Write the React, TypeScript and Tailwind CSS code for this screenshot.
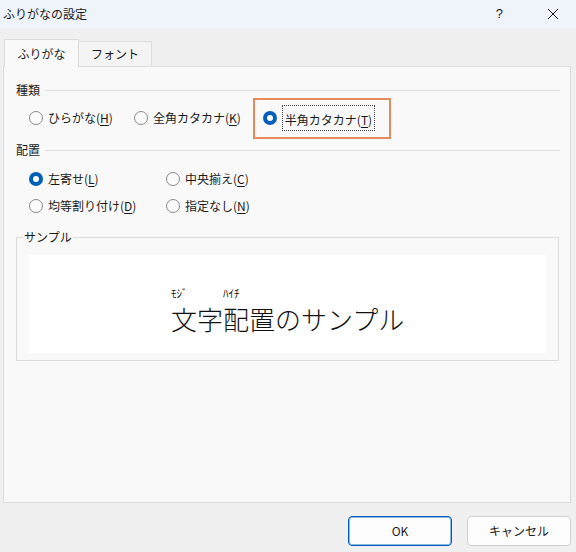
import React from 'react';

// ふりがなの設定 dialog

const jp = { fontFamily: '"Noto Sans CJK JP", "Noto Sans", sans-serif' };

function Radio({ checked = false }: { checked?: boolean }) {
  if (checked) {
    return (
      <span className="w-[14px] h-[14px] rounded-full bg-[#005fb8] flex items-center justify-center shrink-0">
        <span className="w-[6px] h-[6px] rounded-full bg-white" />
      </span>
    );
  }
  return <span className="w-[14px] h-[14px] rounded-full border border-[#8a8a8a] bg-[#fbfbfb] shrink-0" />;
}

function Label({ text, mn }: { text: string; mn: string }) {
  return (
    <span className="text-[12px] leading-[16px] text-[#1a1a1a] whitespace-nowrap">
      {text}(<span className="underline underline-offset-2">{mn}</span>)
    </span>
  );
}

function Option({ text, mn, checked, className = '' }: { text: string; mn: string; checked?: boolean; className?: string }) {
  return (
    <div className={`flex items-center gap-[5px] ${className}`}>
      <Radio checked={checked} />
      <Label text={text} mn={mn} />
    </div>
  );
}

function SectionHeader({ title }: { title: string }) {
  return (
    <div className="flex items-center h-[16px] pr-[10px]">
      <span className="text-[12px] leading-[16px] text-[#1a1a1a]">{title}</span>
      <div className="flex-1 h-px bg-[#dedede] ml-[5px]" />
    </div>
  );
}

export default function App() {
  return (
    <div className="w-[576px] h-[552px] bg-[#f0f0f0] flex flex-col overflow-hidden select-none" style={jp}>
      {/* Title bar */}
      <div className="h-[28px] bg-[#eff3fa] flex items-center shrink-0">
        <span className="pl-[3px] text-[12px] text-[#1a1a1a]">ふりがなの設定</span>
        <div className="flex-1" />
        <span className="text-[13px] text-[#1a1a1a] mr-[44px]" style={{ fontFamily: '"Liberation Sans", sans-serif' }}>?</span>
        <svg width="12" height="12" viewBox="0 0 12 12" className="mr-[17px]">
          <path d="M1 1 L11 11 M11 1 L1 11" stroke="#1a1a1a" strokeWidth="1" />
        </svg>
      </div>

      {/* Tabs */}
      <div className="flex items-end pl-[4px] mt-[11px] h-[27px] shrink-0">
        <div className="relative z-10 -mb-px h-[28px] w-[75px] bg-[#f9f9f9] border border-b-0 border-[#dcdcdc] flex items-center justify-center text-[12px] text-[#1a1a1a]">
          ふりがな
        </div>
        <div className="h-[25px] w-[73px] bg-[#f4f4f4] border border-l-0 border-b-0 border-[#dcdcdc] flex items-center justify-center text-[12px] text-[#1a1a1a]">
          フォント
        </div>
      </div>

      {/* Panel */}
      <div className="ml-[3px] w-[568px] h-[437px] bg-[#f9f9f9] border border-[#dcdcdc] pl-[12px] pt-[15px] shrink-0">
        <SectionHeader title="種類" />
        <div className="flex items-center h-[42px] pl-[13px] mt-[-1px]">
          <Option text="ひらがな" mn="H" />
          <Option text="全角カタカナ" mn="K" className="ml-[21px]" />
          <div className="ml-[12px] h-[41px] border-2 border-[#e98a5c] flex items-center pl-[8px] pr-[14px] gap-[5px]">
            <Radio checked />
            <span className="border border-dotted border-[#444] px-[2px]">
              <Label text="半角カタカナ" mn="T" />
            </span>
          </div>
        </div>
        <div className="mt-[3px]">
          <SectionHeader title="配置" />
        </div>
        <div className="grid grid-cols-[137px_1fr] pl-[13px] mt-[13px] gap-y-[11px]">
          <Option text="左寄せ" mn="L" checked />
          <Option text="中央揃え" mn="C" />
          <Option text="均等割り付け" mn="D" />
          <Option text="指定なし" mn="N" />
        </div>

        {/* Sample */}
        <div className="relative mt-[23px] w-[543px] h-[124px] border border-[#dcdcdc] pt-[17px] pl-[12px]">
          <span className="absolute left-[6px] top-[-9px] bg-[#f9f9f9] px-px text-[12px] leading-[16px] text-[#1a1a1a]">サンプル</span>
          <div className="w-[517px] h-[98px] bg-white flex items-start pl-[142px] pt-[32px]">
            <div className="flex items-end text-[#111]">
              <div className="flex flex-col">
                <span className="text-[11px] leading-[12px] mb-[5px]">ﾓｼﾞ</span>
                <span className="text-[26px] leading-[30px] font-light">文字</span>
              </div>
              <div className="flex flex-col">
                <span className="text-[11px] leading-[12px] mb-[5px]">ﾊｲﾁ</span>
                <span className="text-[26px] leading-[30px] font-light">配置</span>
              </div>
              <span className="text-[26px] leading-[30px] font-light">のサンプル</span>
            </div>
          </div>
        </div>
      </div>

      {/* Buttons */}
      <div className="flex justify-end gap-[15px] pr-[5px] mt-[13px]">
        <button className="w-[104px] h-[30px] rounded-[4px] border border-[#005fb8] bg-[#fdfdfd] text-[12px] text-[#1a1a1a] shadow-[inset_0_0_0_1px_#8ab8e6]">
          OK
        </button>
        <button className="w-[104px] h-[30px] rounded-[4px] border border-[#d0d0d0] bg-[#fdfdfd] text-[12px] text-[#1a1a1a]">
          キャンセル
        </button>
      </div>
    </div>
  );
}
